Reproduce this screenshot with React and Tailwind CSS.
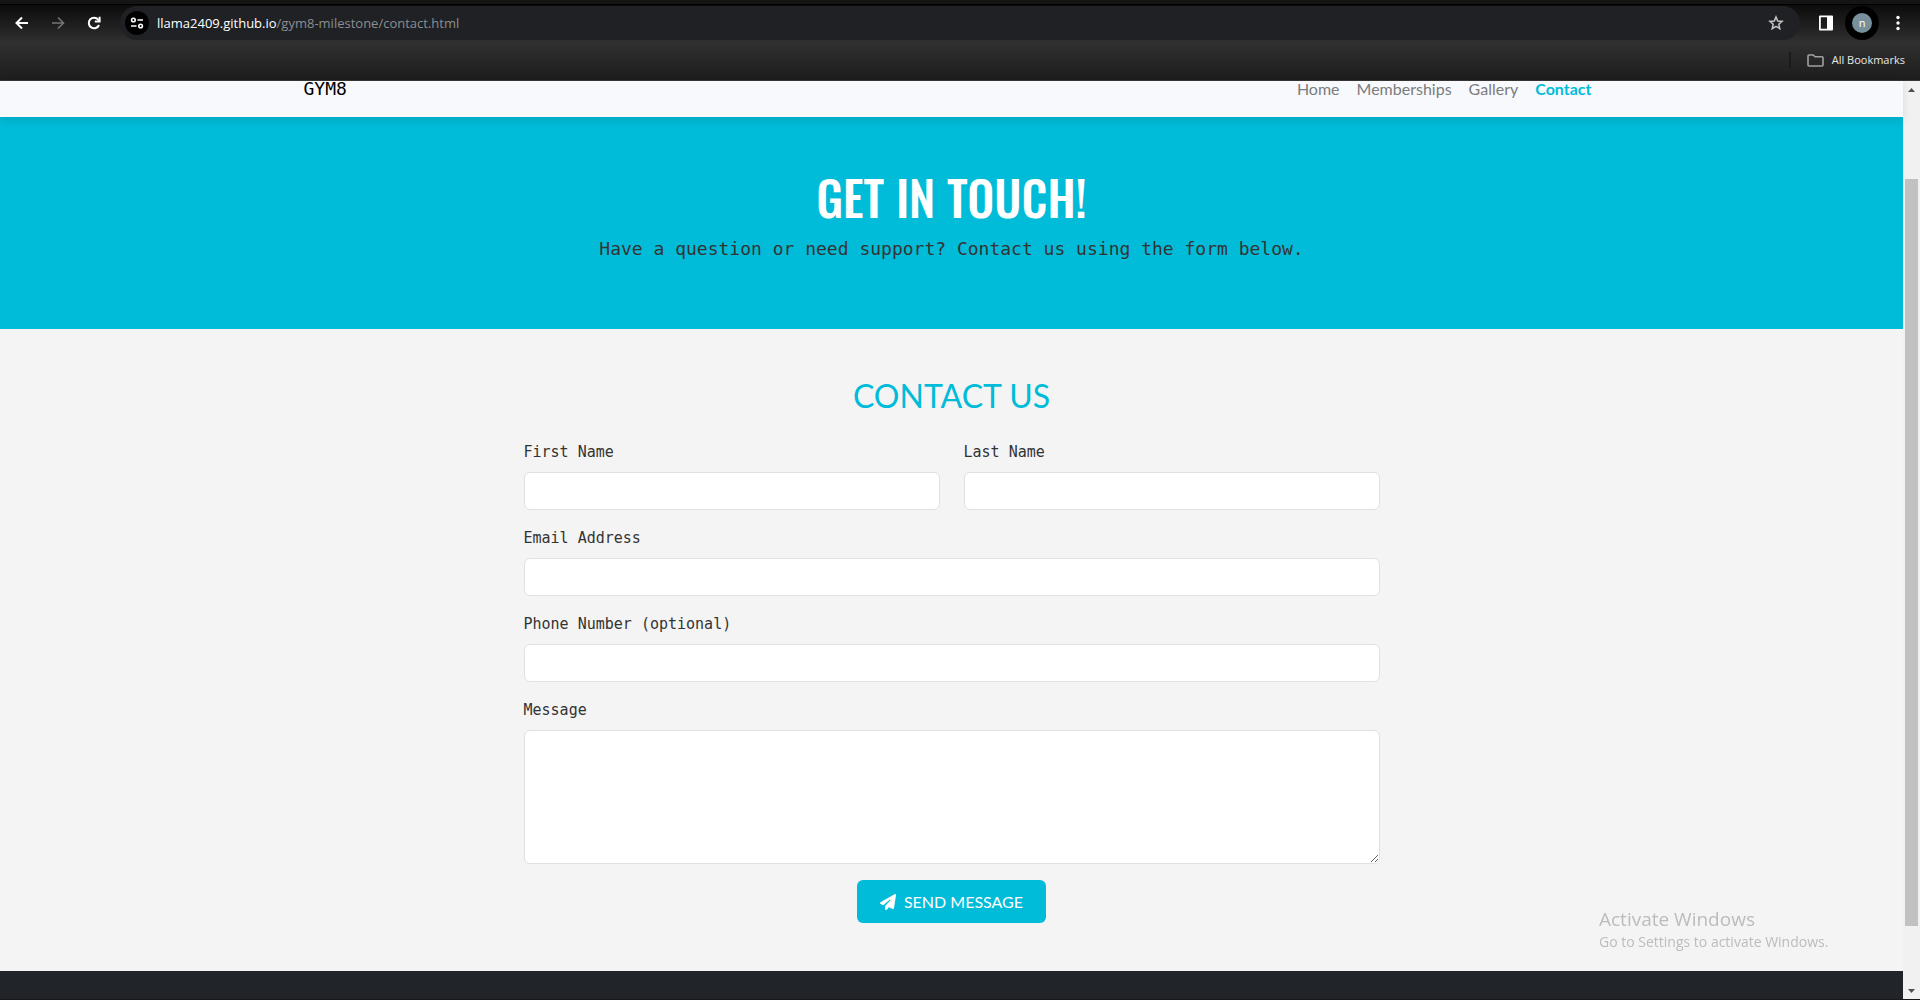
import { FaPaperPlane } from "react-icons/fa6";

const MONO = "font-['DejaVu_Sans_Mono',monospace]";
const FIELD =
  "block w-full rounded-md border border-[#dee2e6] bg-white px-3 py-1.5 text-base leading-6 text-[#212529] outline-none focus:border-[#00bcd9]";

const links = [
  { label: "Home" },
  { label: "Memberships" },
  { label: "Gallery" },
  { label: "Contact", active: true },
];

function IconButton({ label, className = "", children }) {
  return (
    <button type="button" aria-label={label} className={`flex shrink-0 items-center justify-center ${className}`}>
      {children}
    </button>
  );
}

function Toolbar() {
  return (
    <div className="flex h-[34px] items-center font-['Open_Sans',sans-serif]">
      <div className="flex items-center gap-3 pl-[10px]">
        <IconButton label="Back" className="size-6 text-white">
          <svg width="14" height="14" viewBox="0 0 14 14" fill="none" stroke="currentColor" strokeWidth="2">
            <path d="M13 7H2.5M7 1.5 1.5 7 7 12.5" />
          </svg>
        </IconButton>
        <IconButton label="Forward" className="size-6 text-[#747474]">
          <svg width="14" height="14" viewBox="0 0 14 14" fill="none" stroke="currentColor" strokeWidth="1.6">
            <path d="M1 7h10.5M7 1.5 12.5 7 7 12.5" />
          </svg>
        </IconButton>
        <IconButton label="Reload" className="size-6 text-white">
          <svg width="14" height="14" viewBox="0 0 14 14" fill="none" stroke="currentColor" strokeWidth="2">
            <path d="M12 9A5.3 5.3 0 1 1 11.2 3.6L12.5 5" />
            <path d="M12.6.8v4.8H7.8" />
          </svg>
        </IconButton>
      </div>
      <div className="ml-[14px] flex h-[34px] flex-1 items-center rounded-full bg-[#202124] pr-4 pl-[5px]">
        <IconButton label="View site information" className="size-6 rounded-full bg-black text-white">
          <svg width="14" height="12" viewBox="0 0 14 12" fill="none" stroke="currentColor" strokeWidth="1.6">
            <circle cx="3.4" cy="3" r="1.8" />
            <path d="M7.5 3H13M1 9h5.5" />
            <circle cx="10.6" cy="9" r="1.8" />
          </svg>
        </IconButton>
        <p className="ml-2 flex-1 text-[13px] leading-5 text-white">
          llama2409.github.io<span className="text-[#8b8e92]">/gym8-milestone/contact.html</span>
        </p>
        <IconButton label="Bookmark this tab" className="size-4 text-[#c7c7c7]">
          <svg width="16" height="16" viewBox="0 0 16 16" fill="none" stroke="currentColor" strokeWidth="1.5">
            <path d="m8 2 1.7 4 4.4.4-3.3 2.9 1 4.3L8 11.3l-3.8 2.3 1-4.3L1.900 6.400l4.400-.4Z" />
          </svg>
        </IconButton>
      </div>
      <div className="flex items-center pr-[14px] pl-[18px]">
        <IconButton label="Side panel" className="size-4 text-white">
          <svg width="16" height="16" viewBox="0 0 16 16" fill="currentColor">
            <path fillRule="evenodd" d="M2 .5h12a1 1 0 0 1 1 1v13a1 1 0 0 1-1 1H2a1 1 0 0 1-1-1v-13a1 1 0 0 1 1-1ZM2.800 2.300v11.400H9V2.300Z" />
          </svg>
        </IconButton>
        <IconButton label="Profile" className="ml-[11px] size-[34px] rounded-full bg-black">
          <span className="flex size-5 items-center justify-center rounded-full bg-[#78909c] pb-px text-[11px] leading-none text-white">
            n
          </span>
        </IconButton>
        <IconButton label="Menu" className="ml-[11px] size-4 text-white">
          <svg width="4" height="16" viewBox="0 0 4 16" fill="currentColor">
            <circle cx="2" cy="2.500" r="1.700" />
            <circle cx="2" cy="8" r="1.700" />
            <circle cx="2" cy="13.500" r="1.700" />
          </svg>
        </IconButton>
      </div>
    </div>
  );
}

function BrowserChrome() {
  return (
    <header className="flex shrink-0 flex-col border-b border-[#3a3535] bg-[#2e2e2e]">
      <div className="h-[5px] border-b border-black bg-[#151515]" />
      <div className="h-[75px] bg-linear-to-b from-[#0c0c0c] via-[#303030] via-50% to-[#1d1d1d] pt-px">
        <Toolbar />
        <div className="flex h-10 items-center justify-end pr-[15px]">
          <div className="mr-4 h-4 w-0.5 bg-[#1a1a1a]" />
          <button
            type="button"
            className="flex items-center gap-2 font-['Open_Sans',sans-serif] text-[11px] text-[#e8e8e8]"
          >
            <svg width="17" height="13" viewBox="0 0 17 13" fill="none" stroke="#a0a0a0" strokeWidth="1.600">
              <path d="M1 2a1 1 0 0 1 1-1h4.300l1.700 1.700H15a1 1 0 0 1 1 1V11a1 1 0 0 1-1 1H2a1 1 0 0 1-1-1Z" />
            </svg>
            All Bookmarks
          </button>
        </div>
      </div>
    </header>
  );
}

function Navbar() {
  return (
    <nav className="relative bg-[#f8f9fc] shadow-[0_4px_8px_rgba(0,0,0,0.1)]">
      <div className="mx-auto flex max-w-[1320px] items-end justify-between px-3 pb-5">
        <a href="#home" className={`${MONO} text-lg leading-4 text-black`}>
          GYM8
        </a>
        <ul className="flex gap-px text-base leading-4">
          {links.map(({ label, active }) => (
            <li key={label}>
              <a
                href={`#${label.toLowerCase()}`}
                className={active ? "px-2 font-bold text-[#00bcd9]" : "px-2 text-[#7b7c7d]"}
              >
                {label}
              </a>
            </li>
          ))}
        </ul>
      </div>
    </nav>
  );
}

function Hero() {
  return (
    <section className="bg-[#00bcd9] px-3 py-12 text-center">
      <h1 className="mb-1 font-['Oswald','Roboto_Condensed',sans-serif] text-5xl leading-[64px] font-medium text-white">
        GET IN TOUCH!
      </h1>
      <p className={`${MONO} mb-4 text-lg leading-8 text-[#333333]`}>
        Have a question or need support? Contact us using the form below.
      </p>
    </section>
  );
}

function Field({ id, label, type = "text", rows }) {
  return (
    <div className="flex flex-1 flex-col gap-2">
      <label htmlFor={id} className={`${MONO} text-[15px] leading-6 text-[#333333]`}>
        {label}
      </label>
      {rows ? (
        <textarea id={id} rows={rows} className={`${FIELD} resize-y`} />
      ) : (
        <input id={id} type={type} className={FIELD} />
      )}
    </div>
  );
}

function ContactForm() {
  return (
    <section className="px-3 py-12">
      <h2 className="mb-[25px] text-center text-[32px] leading-[38px] text-[#00bcd9]">CONTACT US</h2>
      <form className="mx-auto flex max-w-[856px] flex-col gap-4" onSubmit={(e) => e.preventDefault()}>
        <div className="flex gap-6">
          <Field id="first-name" label="First Name" />
          <Field id="last-name" label="Last Name" />
        </div>
        <Field id="email" label="Email Address" type="email" />
        <Field id="phone" label="Phone Number (optional)" type="tel" />
        <Field id="message" label="Message" rows={5} />
        <button
          type="submit"
          className="flex h-[43px] items-center gap-2 self-center rounded-md bg-[#00bcd9] px-[23px] text-base text-white"
        >
          <FaPaperPlane className="size-4" />
          SEND MESSAGE
        </button>
      </form>
    </section>
  );
}

function Scrollbar() {
  return (
    <div className="flex w-[17px] shrink-0 flex-col items-center bg-[#f1f1f1]" aria-hidden="true">
      <svg width="17" height="17" viewBox="0 0 17 17" fill="#505050">
        <path d="M5 11h7L8.500 7Z" />
      </svg>
      <div className="flex-[81]" />
      <div className="w-[13px] flex-[748] bg-[#c1c1c1]" />
      <div className="flex-[56]" />
      <svg width="17" height="17" viewBox="0 0 17 17" fill="#505050">
        <path d="M5 7h7l-3.500 4Z" />
      </svg>
    </div>
  );
}

export default function App() {
  return (
    <div className="flex min-h-screen flex-col border-b border-[#1a1718] font-['Lato',sans-serif]">
      <BrowserChrome />
      <div className="flex flex-1">
        <main className="flex min-w-0 flex-1 flex-col bg-[#f4f4f4]">
          <Navbar />
          <Hero />
          <ContactForm />
          <footer className="flex-1 bg-[#212529]" />
        </main>
        <Scrollbar />
      </div>
      <aside className="pointer-events-none fixed right-[85px] bottom-[49px] w-[236px] font-['Open_Sans',sans-serif] text-[#bcbcbc]">
        <p className="text-[19px] leading-7">Activate Windows</p>
        <p className="text-sm leading-[18px]">Go to Settings to activate Windows.</p>
      </aside>
    </div>
  );
}
